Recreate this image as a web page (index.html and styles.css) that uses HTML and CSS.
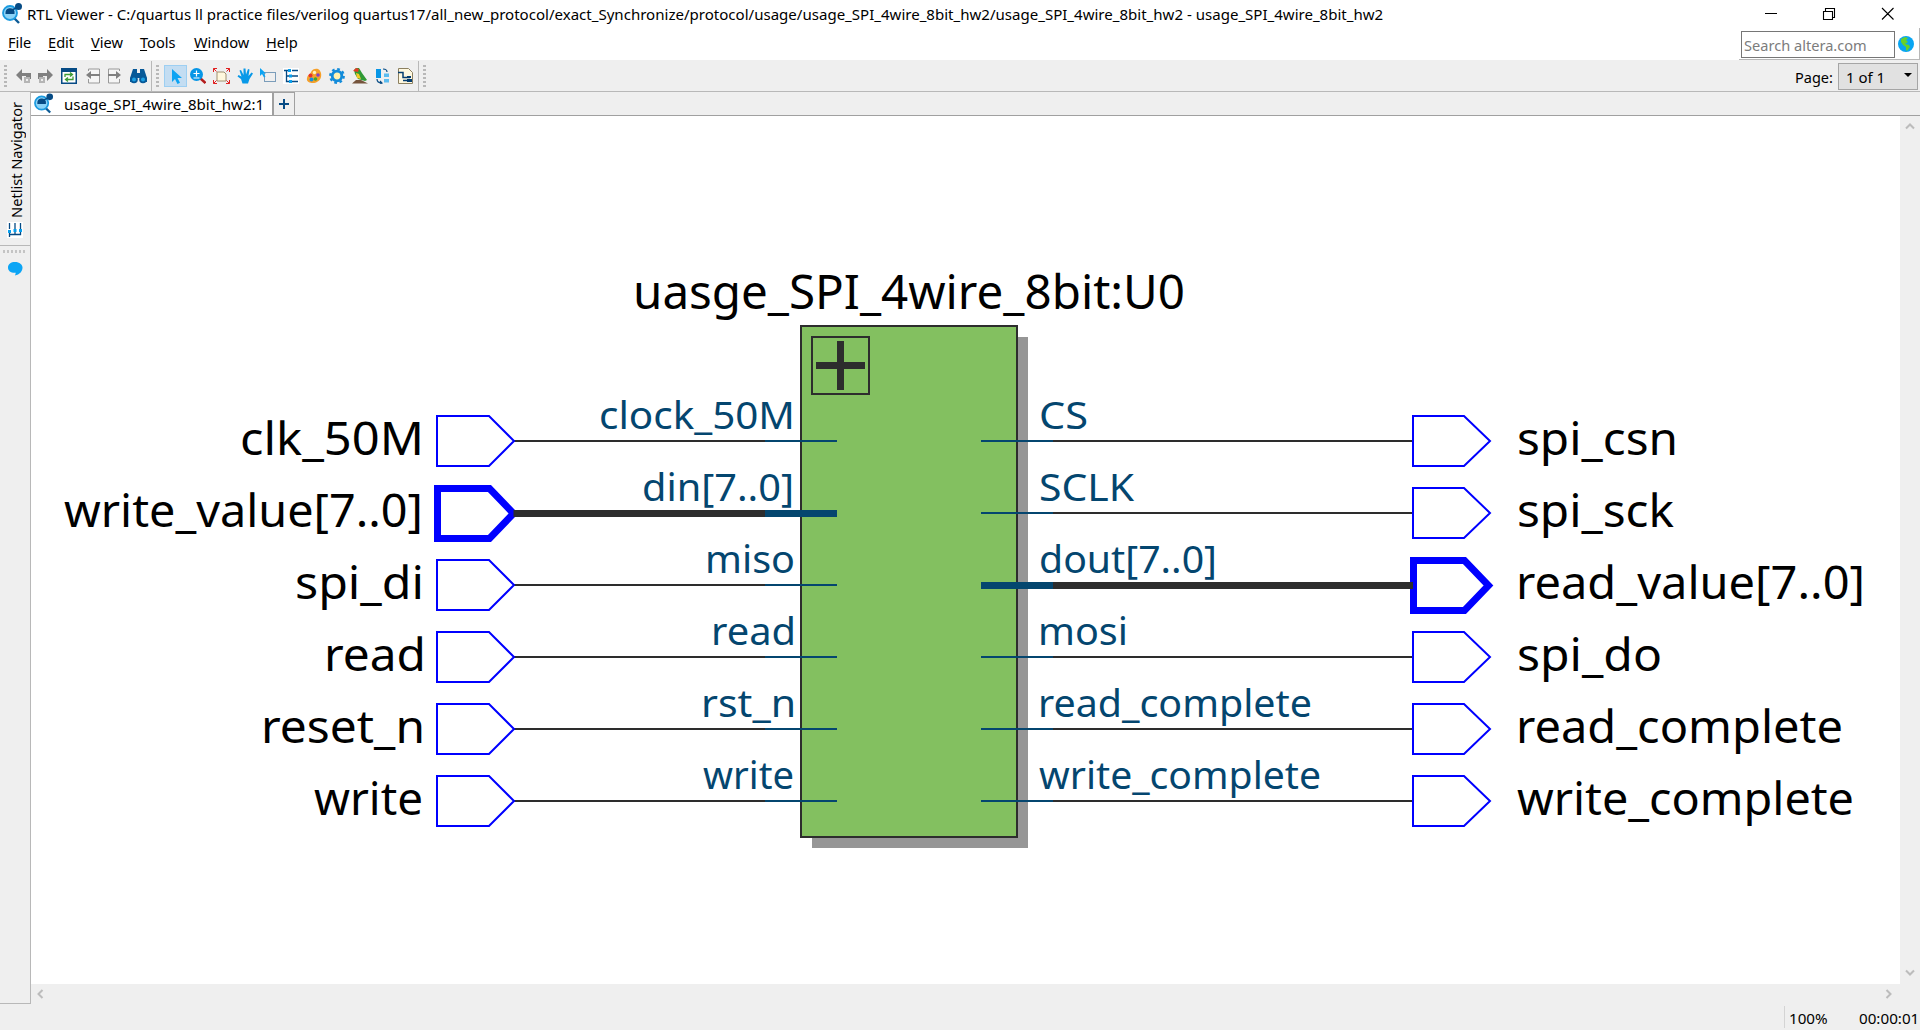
FILE: index.html
```html
<!DOCTYPE html>
<html lang="en">
<head>
<meta charset="utf-8">
<title>RTL Viewer</title>
<link rel="stylesheet" href="styles.css">
</head>
<body>
<svg class="defs" width="0" height="0">
  <symbol id="logo" viewBox="0 0 21 21">
    <path d="M11 14l6 6" stroke="#0d5c96" stroke-width="2.4"/>
    <circle cx="8" cy="10" r="7" fill="#8bd3f7" stroke="#1b9be0" stroke-width="1.8"/>
    <path d="M3.500 10a4.600 4.600 0 0 1 9-1.500v2.500h-9z" fill="#064b85"/>
    <path d="M10 7l6-3" stroke="#064b85" stroke-width="1.500"/>
    <circle cx="16.500" cy="3.500" r="3.500" fill="#064b85"/>
  </symbol>
  <symbol id="tree" viewBox="0 0 16 16">
    <rect width="16" height="16" fill="#fff"/>
    <path d="M1 2.500h4M3.500 3v10.500h3M3.500 8h3M9 2.500h6M9 8h6M9 13.500h6" fill="none" stroke="#064b85" stroke-width="1.300"/>
    <path d="M5 1h3v3H5zM6 6.500h3v3H6zM6 12h3v3H6z" fill="#08a0ee"/>
  </symbol>
</svg>
<header class="titlebar">
  <svg class="logo" width="21" height="21"><use href="#logo"/></svg>
  <span class="title">RTL Viewer - C:/quartus ll practice files/verilog quartus17/all_new_protocol/exact_Synchronize/protocol/usage/usage_SPI_4wire_8bit_hw2/usage_SPI_4wire_8bit_hw2 - usage_SPI_4wire_8bit_hw2</span>
  <svg class="winbtns" width="120" height="28" fill="none" stroke="#000" stroke-width="1.100">
    <path d="M0 13.500h12M58.500 11.500h9v8h-9zM60.500 11.500v-3h9v9h-2M117 8l11.500 11.500M128.500 8L117 19.500"/>
  </svg>
</header>
<div class="menubar">
  <nav class="menu">
    <span class="m1"><u>F</u>ile</span><span class="m2"><u>E</u>dit</span><span class="m3"><u>V</u>iew</span><span class="m4"><u>T</u>ools</span><span class="m5"><u>W</u>indow</span><span class="m6"><u>H</u>elp</span>
  </nav>
  <div class="searchbox">
    <div class="search">Search altera.com</div>
    <svg width="16" height="16" viewBox="0 0 16 16"><circle cx="8" cy="8" r="8" fill="#08a5f2"/><path d="M3 3l4-2 3 1-2 2 2 2-3 2 4 1 1 2-3 4-1-1 0-3-3-2-2-3z" fill="#66d12a"/></svg>
  </div>
</div>
<div class="toolbar">
  <div class="group g1">
    <i class="grip"></i>
    <svg class="a" width="16" height="16"><path d="M0 7l6-6v4h9v6h-5V8H6v5z" fill="#808080"/><path d="M8 9h6v6H8z" fill="#b5b5b5"/><path d="M10 11h2v2h-2z" fill="#eee"/></svg>
    <svg class="b" width="16" height="16"><path d="M16 7l-6-6v4H1v6h5V8h4v5z" fill="#808080"/><path d="M2 9h6v6H2z" fill="#b5b5b5"/><path d="M4 11h2v2H4z" fill="#eee"/></svg>
    <svg class="c" width="16" height="16"><path d="M.750.750h14.500v14.500H.750z" fill="#fff" stroke="#064b85" stroke-width="1.500"/><path d="M0 0h16v4H0z" fill="#064b85"/><path d="M4 9V6.500h7M9 4.500l2.500 2L9 8.500M12 8.500v3H5M7 9.500l-2.500 2 2.500 2" fill="none" stroke="#3d9b35" stroke-width="1.300"/></svg>
    <svg class="d" width="16" height="16"><path d="M2.500 3V1h11v14h-11v-4" fill="#f5f5f5" stroke="#999"/><path d="M0 7l5-4v3h9v2H5v3z" fill="#808080"/></svg>
    <svg class="e" width="16" height="16"><path d="M12.500 3V1h-11v14h11v-4" fill="#f5f5f5" stroke="#999"/><path d="M14 7l-5-4v3H1v2h8v3z" fill="#808080"/></svg>
    <svg class="f" width="17" height="16"><path d="M3 1h4v4h3V1h4l3 9v4h-5l-2-4H7l-2 4H0v-4z" fill="#075998"/><circle cx="4" cy="11.500" r="3.800" fill="#075998"/><circle cx="13" cy="11.500" r="3.800" fill="#075998"/><circle cx="4" cy="11.500" r="2" fill="#1ca0e4"/><circle cx="13" cy="11.500" r="2" fill="#1ca0e4"/></svg>
  </div>
  <div class="group g2">
    <i class="grip"></i>
    <span class="sel"><svg width="10" height="16"><path d="M0 0v13l3-3 2.500 5 2.500-1.200-2.500-4.800H10z" fill="#0ba3f3"/></svg></span>
    <svg width="16" height="16"><path d="M10 10l5.500 5" stroke="#b41d1d" stroke-width="2.500"/><circle cx="6.500" cy="6.500" r="6.500" fill="#0796e6"/><path d="M6.500 2.500v6M3.500 5.500h6M3.500 10h6" stroke="#fff" stroke-width="1.200"/></svg>
    <svg width="17" height="16"><path d="M4 4h7l2 2v7H4z" fill="#fff8dd" stroke="#a09070"/><path d="M.5 4V.5H4M.5.500l3 3M13 .5h3.500V4M16.500.500l-3 3M.5 12v3.500H4M.5 15.500l3-3M13 15.500h3.500V12M16.500 15.500l-3-3" fill="none" stroke="#e02020"/></svg>
    <svg width="16" height="16"><path d="M5.500 15.500L4 11 .5 8.500l1-1.500L4.500 8.500 2.500 2.500 4 2l2.500 5L6.500.500h2L9 6.500l2-5.500 1.500.5L11.500 8l3-3.500L16 5.500 12.500 11l-1.500 4.500z" fill="#0999e8"/></svg>
    <svg width="16" height="16"><path d="M4.500 4.500h11v9h-11z" fill="none" stroke="#064b85" stroke-dasharray="1 1"/><path d="M0 0v8l2-2 2 3.500 1.500-1-2-3H6z" fill="#0ba3f3"/></svg>
    <svg width="16" height="16"><use href="#tree"/></svg>
    <svg width="16" height="16"><path d="M1 10C2 6 4 7 5 4S10 0 12 1s4 4 3 8-5 6-8 6-7-1-6-5z" fill="#f6a02a"/><circle cx="4.500" cy="7.500" r="2" fill="#e8332a"/><circle cx="5.500" cy="11.500" r="2" fill="#188fe0"/><circle cx="8.500" cy="4.500" r="1.700" fill="#fff2c0"/><circle cx="12" cy="7" r="1.800" fill="#8b3fc0"/><circle cx="9.500" cy="11" r="1.800" fill="#43a62d"/></svg>
    <svg width="16" height="16"><circle cx="8" cy="8" r="6.800" fill="none" stroke="#128bda" stroke-width="2.200" stroke-dasharray="2.700 2.640"/><circle cx="8" cy="8" r="4.800" fill="#fff2b0" stroke="#128bda" stroke-width="2.800"/></svg>
    <svg width="16" height="16"><path d="M2 2l2-2h3l3 5 5 7-2 1-7-2-3-5z" fill="#2f9a35"/><path d="M1 3l3-3 3 1-1 3z" fill="#e43b26"/><path d="M4 5l3 1 2 5-4-1z" fill="#f3cb28"/><path d="M0 15.500l4-3.500h5l7 3.500z" fill="#75543c"/></svg>
    <svg width="16" height="16"><path d="M1 1h5v9H1z" fill="#0796e6"/><path d="M9 5.500h5v3.500H9zM9 11h5v3.500H9z" fill="#5bbcf0"/><path d="M8 1c3 0 4 1 4 3M2 11c0 3 2 4 5 4M5 13l2 2-2 1" fill="none" stroke="#064b85" stroke-width="1.200"/></svg>
    <svg width="15" height="16"><path d="M.5.500h10l4 4v11H.5z" fill="#fff8df" stroke="#8c8060"/><path d="M0 4.500h5v5h7M5 12.500h4" fill="none" stroke="#063e70" stroke-width="1.500"/><path d="M9 8h4v2H9zM9 11h5v3H9z" fill="#063e70"/></svg>
  </div>
  <i class="grip last"></i>
  <label class="page">Page:</label>
  <div class="combo">1 of 1<i class="caret"></i></div>
</div>
<main class="main">
  <aside class="side">
    <div class="navtab"><span>Netlist Navigator</span><svg width="16" height="16"><g transform="rotate(-90 8 8)"><use href="#tree" width="16" height="16"/></g></svg></div>
    <i class="dots"></i>
    <svg class="bubble" width="15" height="14"><path d="M7 0c4.500 0 7.500 2.500 7.500 5.500 0 4-3 7-7.500 8l.8-2.700C3 11.200 0 9 0 5.500S3 0 7 0z" fill="#0ca5f5"/></svg>
  </aside>
  <section class="work">
    <div class="tabs">
      <div class="tab"><svg width="20" height="21"><use href="#logo"/></svg><span>usage_SPI_4wire_8bit_hw2:1</span></div>
      <div class="plus"><svg width="12" height="12"><path d="M6 1v10M1 6h10" stroke="#064b85" stroke-width="2"/></svg></div>
    </div>
    <div class="view">
      <svg class="canvas" width="1869" height="868" viewBox="31 116 1869 868">
        <path class="shadow" d="M812 337h216v511H812z"/>
        <path class="block" d="M801 326h216v511H801z"/>
        <path class="box" d="M812 337h57v57h-57z"/>
        <path class="cross" d="M816 365.500h49M840.500 341v49"/>
        <path class="wire" d="M514 441h251M514 585h251M514 657h251M514 729h251M514 801h251M1053 441h360M1053 513h360M1053 657h360M1053 729h360M1053 801h360"/>
        <path class="pin" d="M765 441h72M765 585h72M765 657h72M765 729h72M765 801h72M981 441h72M981 513h72M981 657h72M981 729h72M981 801h72"/>
        <path class="port" d="M437 416h52l25 25-25 25h-52zM437 560h52l25 25-25 25h-52zM437 632h52l25 25-25 25h-52zM437 704h52l25 25-25 25h-52zM437 776h52l25 25-25 25h-52z"/>
        <path class="port" d="M1413 416h51l26 25-26 25h-51zM1413 488h51l26 25-26 25h-51zM1413 632h51l26 25-26 25h-51zM1413 704h51l26 25-26 25h-51zM1413 776h51l26 25-26 25h-51z"/>
        <path class="port bus" d="M437.500 488.500h52l24 25-24 25h-52zM1413.500 560.500h51l24 25-24 25h-51z"/>
        <path class="wire bus" d="M513.500 513.500H765M1053 585.500h360"/>
        <path class="pin bus" d="M765 513.500h72M981 585.500h72"/>
        <text class="name" x="633" y="308.500" textLength="552" lengthAdjust="spacingAndGlyphs">uasge_SPI_4wire_8bit:U0</text>
        <g class="io">
          <text x="240" y="454.500" textLength="184" lengthAdjust="spacingAndGlyphs">clk_50M</text>
          <text x="64" y="526.500" textLength="359" lengthAdjust="spacingAndGlyphs">write_value[7..0]</text>
          <text x="295" y="598.500" textLength="129" lengthAdjust="spacingAndGlyphs">spi_di</text>
          <text x="324" y="670.500" textLength="102" lengthAdjust="spacingAndGlyphs">read</text>
          <text x="261" y="742.500" textLength="164" lengthAdjust="spacingAndGlyphs">reset_n</text>
          <text x="314" y="814.500" textLength="109" lengthAdjust="spacingAndGlyphs">write</text>
          <text x="1517" y="454.500" textLength="161" lengthAdjust="spacingAndGlyphs">spi_csn</text>
          <text x="1517" y="526.500" textLength="157" lengthAdjust="spacingAndGlyphs">spi_sck</text>
          <text x="1516" y="598.500" textLength="349" lengthAdjust="spacingAndGlyphs">read_value[7..0]</text>
          <text x="1517" y="670.500" textLength="145" lengthAdjust="spacingAndGlyphs">spi_do</text>
          <text x="1516" y="742.500" textLength="327" lengthAdjust="spacingAndGlyphs">read_complete</text>
          <text x="1517" y="814.500" textLength="337" lengthAdjust="spacingAndGlyphs">write_complete</text>
        </g>
        <g class="pinname">
          <text x="599" y="428.500" textLength="196" lengthAdjust="spacingAndGlyphs">clock_50M</text>
          <text x="642" y="500.500" textLength="152" lengthAdjust="spacingAndGlyphs">din[7..0]</text>
          <text x="705" y="572.500" textLength="90" lengthAdjust="spacingAndGlyphs">miso</text>
          <text x="711" y="644.500" textLength="85" lengthAdjust="spacingAndGlyphs">read</text>
          <text x="701" y="716.500" textLength="95" lengthAdjust="spacingAndGlyphs">rst_n</text>
          <text x="703" y="788.500" textLength="91" lengthAdjust="spacingAndGlyphs">write</text>
          <text x="1039" y="428.500" textLength="49" lengthAdjust="spacingAndGlyphs">CS</text>
          <text x="1039" y="500.500" textLength="95" lengthAdjust="spacingAndGlyphs">SCLK</text>
          <text x="1039" y="572.500" textLength="178" lengthAdjust="spacingAndGlyphs">dout[7..0]</text>
          <text x="1038" y="644.500" textLength="90" lengthAdjust="spacingAndGlyphs">mosi</text>
          <text x="1038" y="716.500" textLength="274" lengthAdjust="spacingAndGlyphs">read_complete</text>
          <text x="1039" y="788.500" textLength="282" lengthAdjust="spacingAndGlyphs">write_complete</text>
        </g>
      </svg>
      <div class="vscroll"><svg width="10" height="8"><path d="M1 6.500l4-4 4 4"/></svg><svg width="10" height="8"><path d="M1 1.500l4 4 4-4"/></svg></div>
    </div>
    <div class="hscroll"><svg width="8" height="10"><path d="M6.500 1l-4 4 4 4"/></svg><svg width="8" height="10"><path d="M1.500 1l4 4-4 4"/></svg></div>
  </section>
</main>
<footer class="status"><span class="zoom">100%</span><span class="time">00:00:01</span></footer>
</body>
</html>
```
FILE: styles.css
```css
* { box-sizing: border-box; }
body { margin: 0; width: 1920px; height: 1030px; overflow: hidden; display: flex; flex-direction: column; background: #efefef; color: #000; font: 14.5px/20px "Noto Sans", sans-serif; white-space: nowrap; }
svg { display: block; flex: none; }
.defs { position: absolute; }
.titlebar { height: 28px; background: #fff; display: flex; align-items: flex-start; padding: 3px 0 0 2px; }
.title { margin-left: 4px; padding-top: 1px; width: 1358px; font-size: 15.06px; }
.winbtns { margin: -3px 0 0 380px; overflow: visible; }
.menubar { height: 33px; background: #fff; border-bottom: 1px solid #efefef; display: flex; justify-content: space-between; }
.menu { display: flex; padding: 4px 0 0 8px; font-size: 14.6px; }
.menu u { text-underline-offset: 2px; }
.m1 { width: 40px; }
.m2 { width: 43px; }
.m3 { width: 49px; }
.m4 { width: 54px; }
.m5 { width: 72px; }
.searchbox { width: 181px; height: 32px; padding: 3px 0 0 2px; display: flex; gap: 3px; border-right: 1px solid #b8b8b8; border-bottom: 1px solid #b8b8b8; }
.searchbox svg { margin-top: 5px; }
.search { width: 154px; height: 27px; border: 1px solid #767676; padding: 3px 2px; color: #7c7c7c; font-size: 14.6px; }
.toolbar { height: 31px; display: flex; align-items: center; border-bottom: 1px solid #b8b8b8; }
.group { height: 30px; display: flex; align-items: center; border-right: 1px solid #b8b8b8; }
.grip { width: 3px; height: 23px; background: repeating-linear-gradient(#b8b8b8 0 2px, transparent 2px 4px); }
.g1 { width: 152px; padding-left: 4px; }
.g1 .a { margin-left: 9px; }
.g1 .b { margin-left: 5px; }
.g1 .c { margin-left: 8px; }
.g1 .d { margin-left: 9px; }
.g1 .e { margin-left: 5px; }
.g1 .f { margin-left: 7px; }
.g2 { width: 267px; padding-left: 4px; gap: 7px; }
.sel { width: 23px; height: 22px; margin-left: -2px; padding: 3px 0 0 7px; border: 1px solid #9dcff2; background: #c3ddf2; margin-right: -4px; }
.last { margin-left: 4px; }
.page { margin-left: 1369px; padding-top: 2px; width: 43px; }
.combo { width: 80px; height: 27px; display: flex; align-items: center; justify-content: space-between; border: 1px solid #a5a5a5; background: #e1e1e1; padding: 1px 5px 0 7px; font-size: 15px; }
.caret { border: 4px solid transparent; border-top-color: #000; border-bottom: 0; margin-bottom: 4px; }
.main { flex: 1; display: flex; min-height: 0; }
.side { width: 31px; height: 912px; border-right: 1px solid #b8b8b8; border-bottom: 1px solid #b8b8b8; display: flex; flex-direction: column; align-items: center; }
.navtab { height: 154px; width: 30px; display: flex; flex-direction: column; align-items: center; justify-content: flex-end; padding-bottom: 7px; gap: 4px; border-bottom: 1px solid #b8b8b8; }
.navtab span { writing-mode: vertical-rl; transform: rotate(180deg); font-size: 14.6px; margin-left: 2px; }
.dots { width: 24px; height: 3px; margin-top: 4px; background: repeating-linear-gradient(90deg, #c4c4c4 0 2px, transparent 2px 4px); }
.bubble { margin-top: 9px; }
.work { flex: 1; display: flex; flex-direction: column; min-width: 0; }
.tabs { height: 24px; display: flex; border-bottom: 1px solid #a0a0a0; }
.tab { width: 242px; background: #fff; border: solid #a0a0a0; border-width: 1px 1px 0 0; display: flex; align-items: flex-start; padding-left: 3px; }
.tab span { margin-left: 10px; padding-top: 1px; font-size: 15.05px; }
.plus { width: 22px; border: 1px solid #a0a0a0; border-bottom: 0; display: flex; align-items: center; justify-content: center; }
.view { height: 868px; display: flex; }
.canvas { background: #fff; }
.canvas path { fill: none; }
.canvas .shadow { fill: #969696; }
.canvas .block { fill: #83c060; stroke: #2d2d2d; stroke-width: 2; }
.canvas .box { stroke: #2d2d2d; stroke-width: 2; }
.canvas .cross { stroke: #2d2d2d; stroke-width: 7; }
.canvas .wire { stroke: #2d2d2d; stroke-width: 2; }
.canvas .pin { stroke: #04466f; stroke-width: 2; }
.canvas .port { stroke: #00f; stroke-width: 2; }
.canvas .bus { stroke-width: 7; }
.name { font-size: 47px; }
.io { font-size: 46px; }
.pinname { font-size: 38px; fill: #04466f; }
.vscroll { width: 20px; display: flex; flex-direction: column; justify-content: space-between; align-items: center; padding: 6px 0 7px; }
.hscroll { height: 20px; width: 1869px; display: flex; align-items: center; justify-content: space-between; padding: 0 7px 0 5px; }
.vscroll path, .hscroll path { fill: none; stroke: #bcbcbc; stroke-width: 2; }
.status { height: 26px; display: flex; justify-content: flex-end; }
.zoom { border-left: 1px solid #d4d4d4; width: 75px; height: 22px; margin-top: 2px; padding: 2px 0 0 4px; font-size: 15.2px; }
.time { width: 61px; padding-top: 4px; font-size: 15.2px; }
```
